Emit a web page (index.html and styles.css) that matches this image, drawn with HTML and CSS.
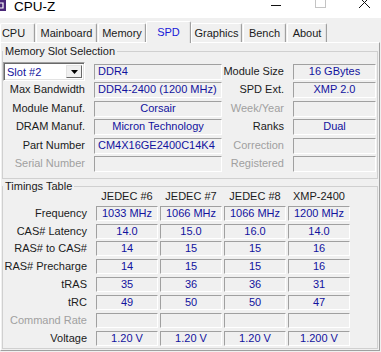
FILE: index.html
```html
<!DOCTYPE html>
<html>

<head>
    <title>CPU-Z</title>
    <meta http-equiv="Content-Type" content="text/html; charset=utf-8" />
    <link rel="stylesheet" href="styles.css">
</head>

<body>
    <div id="titlebar">
        <svg class="app-icon" width="6" height="11" viewBox="0 0 6 11">
            <rect x="0" y="0" width="6" height="11" fill="#4a2778" />
            <path d="M0 3 H3 V8 H0" fill="none" stroke="#fff" stroke-width="1.2" />
        </svg>
        <span class="title">CPU-Z</span>
        <svg class="controls" width="110" height="18" viewBox="0 0 110 18">
            <line x1="0" y1="5.5" x2="10" y2="5.5" stroke="#111" stroke-width="1" />
            <rect x="44.5" y="-2.5" width="10" height="10" fill="none" stroke="#c4c4c4" stroke-width="1" />
            <path d="M88 -3 L99 8 M99 -3 L88 8" stroke="#111" stroke-width="1" />
        </svg>
    </div>

    <div id="tabs">
        <div class="tab tab-cpu">CPU</div>
        <div class="tab tab-mainboard">Mainboard</div>
        <div class="tab tab-memory">Memory</div>
        <div class="tab tab-spd selected">SPD</div>
        <div class="tab tab-graphics">Graphics</div>
        <div class="tab tab-bench">Bench</div>
        <div class="tab tab-about">About</div>
    </div>

    <div id="panel">
        <fieldset class="group slots">
            <legend>Memory Slot Selection</legend>
            <div class="slot-grid">
                <div class="select">
                    <span class="select-value">Slot #2</span>
                    <span class="select-button">
                        <svg width="7" height="4" viewBox="0 0 7 4"><path d="M0 0 H7 L3.5 4 Z" fill="#000" /></svg>
                    </span>
                </div>
                <div class="val left">DDR4</div>
                <div class="label">Module Size</div>
                <div class="val">16 GBytes</div>

                <div class="label">Max Bandwidth</div>
                <div class="val left">DDR4-2400 (1200 MHz)</div>
                <div class="label">SPD Ext.</div>
                <div class="val">XMP 2.0</div>

                <div class="label">Module Manuf.</div>
                <div class="val">Corsair</div>
                <div class="label off">Week/Year</div>
                <div class="val"></div>

                <div class="label">DRAM Manuf.</div>
                <div class="val">Micron Technology</div>
                <div class="label">Ranks</div>
                <div class="val">Dual</div>

                <div class="label">Part Number</div>
                <div class="val left">CM4X16GE2400C14K4</div>
                <div class="label off">Correction</div>
                <div class="val"></div>

                <div class="label off">Serial Number</div>
                <div class="val"></div>
                <div class="label off">Registered</div>
                <div class="val"></div>
            </div>
        </fieldset>

        <fieldset class="group timings">
            <legend>Timings Table</legend>
            <div class="timing-grid">
                <div class="label"></div>
                <div class="head">JEDEC #6</div>
                <div class="head">JEDEC #7</div>
                <div class="head">JEDEC #8</div>
                <div class="head">XMP-2400</div>

                <div class="label">Frequency</div>
                <div class="val">1033 MHz</div>
                <div class="val">1066 MHz</div>
                <div class="val">1066 MHz</div>
                <div class="val">1200 MHz</div>

                <div class="label">CAS# Latency</div>
                <div class="val">14.0</div>
                <div class="val">15.0</div>
                <div class="val">16.0</div>
                <div class="val">14.0</div>

                <div class="label">RAS# to CAS#</div>
                <div class="val">14</div>
                <div class="val">15</div>
                <div class="val">15</div>
                <div class="val">16</div>

                <div class="label">RAS# Precharge</div>
                <div class="val">14</div>
                <div class="val">15</div>
                <div class="val">15</div>
                <div class="val">16</div>

                <div class="label">tRAS</div>
                <div class="val">35</div>
                <div class="val">36</div>
                <div class="val">36</div>
                <div class="val">31</div>

                <div class="label">tRC</div>
                <div class="val">49</div>
                <div class="val">50</div>
                <div class="val">50</div>
                <div class="val">47</div>

                <div class="label off">Command Rate</div>
                <div class="val"></div>
                <div class="val"></div>
                <div class="val"></div>
                <div class="val"></div>

                <div class="label">Voltage</div>
                <div class="val">1.20 V</div>
                <div class="val">1.20 V</div>
                <div class="val">1.20 V</div>
                <div class="val">1.200 V</div>
            </div>
        </fieldset>
    </div>
</body>

</html>
```

FILE: styles.css
```css
* {
    margin: 0;
    padding: 0;
    box-sizing: border-box;
}

html,
body {
    background: #f0f0f0;
    color: #1b1b1b;
    font-family: 'Liberation Sans', Arial, sans-serif;
    font-size: 11px;
    height: 352px;
    overflow: hidden;
    width: 381px;
}

#titlebar {
    align-items: flex-start;
    background: #fff;
    display: flex;
    height: 18px;
}

#titlebar .title {
    color: #000;
    font-size: 13.5px;
    line-height: 14px;
    margin-left: 8px;
}

#titlebar .controls {
    margin-left: auto;
}

#tabs {
    align-items: flex-end;
    display: flex;
    height: 24px;
}

.tab {
    background: #f0f0f0;
    border-left: 1px solid #fff;
    border-right: 1px solid #a0a0a0;
    border-top: 1px solid #fff;
    border-top-left-radius: 2px;
    border-top-right-radius: 2px;
    box-shadow: inset -1px 0 0 #e3e3e3;
    height: 19px;
    line-height: 18px;
    margin-right: 1px;
    text-align: center;
}

.tab-cpu { width: 35px; padding-right: 8px; }
.tab-mainboard { width: 61px; }
.tab-memory { width: 48px; }
.tab-spd { width: 45px; }
.tab-graphics { width: 51px; }
.tab-bench { width: 43px; }
.tab-about { width: 40px; }

.tab.selected {
    color: #1818d8;
    height: 22px;
    line-height: 20px;
    margin-bottom: -1px;
    margin-left: -1px;
    margin-right: 0;
    position: relative;
    z-index: 1;
}

#panel {
    border-bottom: 1px solid #a0a0a0;
    border-left: 1px solid #fff;
    border-right: 1px solid #a0a0a0;
    border-top: 1px solid #fff;
    height: 309px;
    width: 380px;
}

.group {
    border: 1px solid #d0d0d0;
    margin-left: 1px;
    min-width: 0;
    width: 376px;
}

.group legend {
    line-height: 13px;
    padding: 0 2px;
}

.slots {
    margin-top: 2px;
    padding: 6px 0 6px 0;
}

.timings {
    margin-top: 1px;
    padding: 0 0 2px 0;
}

.slot-grid {
    display: grid;
    grid-auto-rows: 16px;
    grid-template-columns: 91px 128px 71px 83px;
    row-gap: 2.4px;
}

.timing-grid {
    display: grid;
    grid-template-columns: 91px 62px 62px 62px 62px;
    grid-template-rows: 14px;
    grid-auto-rows: 15px;
    column-gap: 2px;
    margin-top: -4px;
    row-gap: 2.85px;
}

.timing-grid .label {
    margin-right: -2px;
}

.label {
    line-height: 15px;
    padding-right: 9px;
    text-align: right;
    white-space: nowrap;
}

.label.off {
    color: #a0a0a0;
}

.head {
    line-height: 14px;
    text-align: center;
}

.val {
    border-bottom: 1px solid #fff;
    border-left: 1px solid #a0a0a0;
    border-right: 1px solid #fff;
    border-top: 1px solid #a0a0a0;
    color: #12129e;
    line-height: 13px;
    overflow: hidden;
    text-align: center;
    white-space: nowrap;
}

.val.left {
    padding-left: 3px;
    text-align: left;
}

.select {
    background: #fff;
    border-bottom: 1px solid #fff;
    border-left: 1px solid #a0a0a0;
    border-right: 1px solid #fff;
    border-top: 1px solid #a0a0a0;
    box-shadow: inset 1px 1px 0 #696969, inset -1px -1px 0 #e3e3e3;
    display: flex;
    height: 19px;
    margin-top: -2px;
    padding: 2px;
    width: 82px;
}

.select-value {
    color: #12129e;
    flex: 1;
    line-height: 14px;
    padding-left: 1px;
}

.select-button {
    align-items: center;
    background: #f0f0f0;
    border-bottom: 1px solid #696969;
    border-left: 1px solid #e3e3e3;
    border-right: 1px solid #696969;
    border-top: 1px solid #e3e3e3;
    display: flex;
    justify-content: center;
    width: 16px;
}
```
